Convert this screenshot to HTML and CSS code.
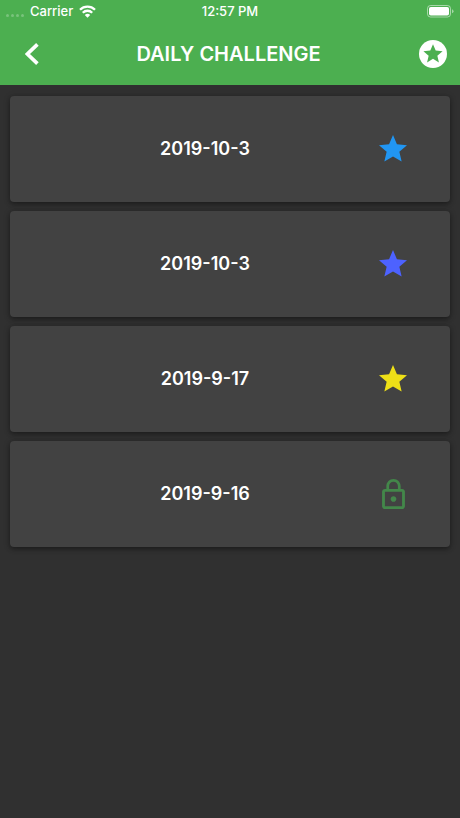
FILE: index.html
```html
<!DOCTYPE html>
<html lang="en">
<head>
<meta charset="utf-8">
<meta name="viewport" content="width=device-width, initial-scale=1">
<title>Daily Challenge</title>
<link rel="stylesheet" href="styles.css">
</head>
<body>
<header class="header">
  <div class="status">
    <div class="carrier">
      <span class="signal"><i></i><i></i><i></i><i></i></span>
      <span>Carrier</span>
      <svg class="wifi" viewBox="0 0 17 13" aria-hidden="true"><g fill="none" stroke="#fff" stroke-width="2.3"><path d="M1 4.700a10.600 10.600 0 0 1 15 0"/><path d="M3.800 7.700a6.700 6.700 0 0 1 9.400 0"/></g><path fill="#fff" d="M5.800 10a3.900 3.900 0 0 1 5.400 0L8.500 12.700z"/></svg>
    </div>
    <time>12:57 PM</time>
    <svg class="battery" viewBox="0 0 27 13" aria-hidden="true"><rect x=".5" y=".5" width="23" height="11.500" rx="3" fill="none" stroke="#fff" stroke-opacity=".5"/><rect x="2" y="2" width="20" height="8.500" rx="1.800" fill="#fff"/><path d="M25 4.300q1.500.500 1.500 2t-1.500 2z" fill="#fff" fill-opacity=".5"/></svg>
  </div>
  <div class="appbar">
    <button class="icon-button" type="button" aria-label="Back">
      <svg class="back" viewBox="0 0 14 22" aria-hidden="true"><path d="M12.400 1.400 2.400 11l10 9.600" fill="none" stroke="#fff" stroke-width="3.700"/></svg>
    </button>
    <h1 class="title">DAILY CHALLENGE</h1>
    <button class="icon-button" type="button" aria-label="Awards">
      <svg class="award" viewBox="2 2 20 20" aria-hidden="true"><circle cx="12" cy="12" r="10" fill="#fff"/><path d="M16.230 18L12 15.450 7.770 18l1.120-4.810-3.730-3.230 4.920-.42L12 5l1.920 4.530 4.920.42-3.730 3.230z" fill="#4caf50"/></svg>
    </button>
  </div>
</header>
<main class="list">
  <article class="card"><h2 class="date">2019-10-3</h2><svg class="mark blue" viewBox="2 2 20 20" aria-hidden="true"><path d="M12 17.270 18.180 21l-1.640-7.030L22 9.240l-7.190-.61L12 2 9.190 8.630 2 9.240l5.460 4.730L5.820 21z"/></svg></article>
  <article class="card"><h2 class="date">2019-10-3</h2><svg class="mark indigo" viewBox="2 2 20 20" aria-hidden="true"><path d="M12 17.270 18.180 21l-1.640-7.030L22 9.240l-7.190-.61L12 2 9.190 8.630 2 9.240l5.460 4.730L5.820 21z"/></svg></article>
  <article class="card"><h2 class="date">2019-9-17</h2><svg class="mark yellow" viewBox="2 2 20 20" aria-hidden="true"><path d="M12 17.270 18.180 21l-1.640-7.030L22 9.240l-7.190-.61L12 2 9.190 8.630 2 9.240l5.460 4.730L5.820 21z"/></svg></article>
  <article class="card"><h2 class="date">2019-9-16</h2><svg class="lock" viewBox="4 1 16 21" role="img" aria-label="Locked"><path d="M12 17c1.100 0 2-.9 2-2s-.9-2-2-2-2 .9-2 2 .9 2 2 2zm6-9h-1V6c0-2.760-2.240-5-5-5S7 3.240 7 6v2H6c-1.100 0-2 .9-2 2v10c0 1.100.9 2 2 2h12c1.100 0 2-.9 2-2V10c0-1.100-.9-2-2-2zM8.900 6c0-1.710 1.390-3.100 3.100-3.100s3.100 1.390 3.100 3.100v2H8.900V6zM18 20H6V10h12v10z"/></svg></article>
</main>
</body>
</html>
```
FILE: styles.css
```css
* {
  box-sizing: border-box;
}

body {
  margin: 0;
  min-height: 100vh;
  background: #303030;
  color: #fff;
  font-family: Inter, "Liberation Sans", sans-serif;
}

.header {
  background: #4caf50;
}

.status {
  display: grid;
  grid-template-columns: 1fr auto 1fr;
  align-items: center;
  height: 23px;
  padding: 0 6px;
  font-size: 13px;
  font-weight: 500;
  line-height: 23px;
}

.carrier {
  display: flex;
  align-items: center;
  gap: 6px;
}

.signal {
  display: flex;
  gap: 2px;
  padding-top: 8px;
}

.signal i {
  width: 3px;
  height: 3px;
  border-radius: 50%;
  background: rgba(255, 255, 255, 0.25);
}

.wifi {
  width: 17px;
  height: 13px;
}

.battery {
  justify-self: end;
  width: 27px;
  height: 13px;
}

.appbar {
  display: grid;
  grid-template-columns: 48px 1fr 48px;
  align-items: center;
  height: 62px;
  padding: 0 3px 0 8px;
}

.icon-button {
  display: flex;
  align-items: center;
  justify-content: center;
  height: 48px;
  padding: 0;
  border: 0;
  background: none;
}

.back {
  width: 14px;
  height: 22px;
}

.award {
  width: 28px;
  height: 28px;
}

.title {
  margin: 0;
  padding-right: 8px;
  font-size: 20px;
  font-weight: 600;
  line-height: 28px;
  text-align: center;
}

.list {
  display: flex;
  flex-direction: column;
  gap: 9px;
  padding: 11px 10px;
}

.card {
  display: grid;
  grid-template-columns: 1fr 46px;
  align-items: center;
  justify-items: center;
  height: 106px;
  padding: 0 34px 0 30px;
  border-radius: 4px;
  background: #424242;
  box-shadow: 0 2px 4px rgba(0, 0, 0, 0.3), 0 1px 7px rgba(0, 0, 0, 0.2);
}

.date {
  margin: 0;
  font-size: 18px;
  font-weight: 600;
  line-height: 24px;
}

.mark {
  width: 28px;
  height: 28px;
}

.blue {
  fill: #2196f3;
}

.indigo {
  fill: #4d62ff;
}

.yellow {
  fill: #eee017;
}

.lock {
  width: 23px;
  height: 30px;
  fill: #43874a;
}
```
